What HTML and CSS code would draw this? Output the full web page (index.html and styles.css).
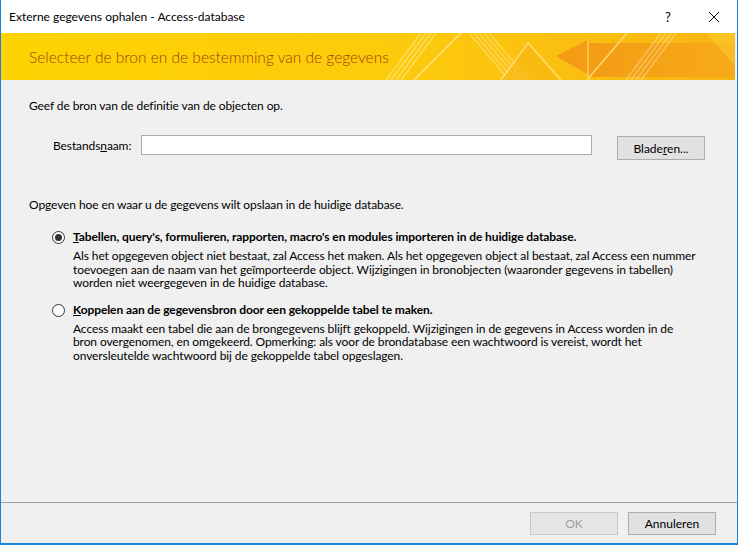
FILE: index.html
```html
<!DOCTYPE html>
<html lang="nl">
<head>
    <meta charset="UTF-8">
    <title>Externe gegevens ophalen - Access-database</title>
    <link rel="stylesheet" href="styles.css">
</head>
<body>
    <div class="window">
        <div class="titlebar">
            <div class="title">Externe gegevens ophalen - Access-database</div>
            <div class="title-btn help">?</div>
            <div class="title-btn close">
                <svg width="12" height="12" viewBox="0 0 12 12"><path d="M1 1 L11 11 M11 1 L1 11" stroke="#000" stroke-width="1"/></svg>
            </div>
        </div>

        <div class="banner">
            <svg class="banner-art" width="734" height="47" viewBox="0 0 734 47" preserveAspectRatio="none">
                <defs>
                    <linearGradient id="bg" x1="0" y1="0" x2="1" y2="0">
                        <stop offset="0" stop-color="#fdd402"/>
                        <stop offset="0.55" stop-color="#fcca0c"/>
                        <stop offset="1" stop-color="#f8b414"/>
                    </linearGradient>
                    <linearGradient id="arrow" x1="0" y1="0" x2="1" y2="0">
                        <stop offset="0" stop-color="#f39a14"/>
                        <stop offset="1" stop-color="#f7aa18"/>
                    </linearGradient>
                </defs>
                <rect width="734" height="47" fill="url(#bg)"/>
                <!-- stripe group left -->
                <g stroke="#fff" stroke-opacity="0.35" stroke-width="1.5">
                    <line x1="420" y1="0" x2="385" y2="47"/>
                    <line x1="425" y1="0" x2="390" y2="47"/>
                    <line x1="430" y1="0" x2="395" y2="47"/>
                    <line x1="435" y1="0" x2="400" y2="47"/>
                </g>
                <line x1="460" y1="0" x2="413" y2="47" stroke="#fff" stroke-opacity="0.5" stroke-width="1.5"/>
                <!-- down stripes -->
                <g stroke="#fff" stroke-opacity="0.3" stroke-width="1.5">
                    <line x1="468" y1="0" x2="508" y2="47"/>
                    <line x1="473" y1="0" x2="513" y2="47"/>
                    <line x1="478" y1="0" x2="518" y2="47"/>
                    <line x1="483" y1="0" x2="523" y2="47"/>
                    <line x1="488" y1="0" x2="528" y2="47"/>
                </g>
                <polygon points="527,10 500,47 556,47" fill="#f8b512" fill-opacity="0.6"/>
                <polyline points="500,47 527,10 560,47" fill="none" stroke="#fde68a" stroke-opacity="0.8" stroke-width="1.5"/>
                <!-- arrow -->
                <polygon points="555,23 588,6 588,10 734,10 734,44 588,44 588,42" fill="url(#arrow)"/>
                <line x1="587" y1="6" x2="587" y2="44" stroke="#fbd15a" stroke-width="1.5"/>
                <line x1="626" y1="0" x2="586" y2="47" stroke="#fde68a" stroke-opacity="0.8" stroke-width="1.5"/>
                <g stroke="#fff" stroke-opacity="0.3" stroke-width="1.5">
                    <line x1="660" y1="0" x2="625" y2="47"/>
                    <line x1="665" y1="0" x2="630" y2="47"/>
                    <line x1="670" y1="0" x2="635" y2="47"/>
                    <line x1="675" y1="0" x2="640" y2="47"/>
                </g>
                <polygon points="705,0 734,0 734,33" fill="#fcd030" fill-opacity="0.5"/>
            </svg>
            <div class="banner-title">Selecteer de bron en de bestemming van de gegevens</div>
        </div>

        <div class="content">
            <p class="intro">Geef de bron van de definitie van de objecten op.</p>

            <div class="file-row">
                <label class="file-label">Bestands<u>n</u>aam:</label>
                <div class="file-input"></div>
                <button class="btn browse">Blade<u>r</u>en...</button>
            </div>

            <p class="intro second">Opgeven hoe en waar u de gegevens wilt opslaan in de huidige database.</p>

            <div class="option">
                <div class="radio checked"><span></span></div>
                <div class="option-text">
                    <div class="option-title"><u>T</u>abellen, query's, formulieren, rapporten, macro's en modules importeren in de huidige database.</div>
                    <div class="option-desc">Als het opgegeven object niet bestaat, zal Access het maken. Als het opgegeven object al bestaat, zal Access een nummer<br>toevoegen aan de naam van het geïmporteerde object. Wijzigingen in bronobjecten (waaronder gegevens in tabellen)<br>worden niet weergegeven in de huidige database.</div>
                </div>
            </div>

            <div class="option">
                <div class="radio"></div>
                <div class="option-text">
                    <div class="option-title"><u>K</u>oppelen aan de gegevensbron door een gekoppelde tabel te maken.</div>
                    <div class="option-desc">Access maakt een tabel die aan de brongegevens blijft gekoppeld. Wijzigingen in de gegevens in Access worden in de<br>bron overgenomen, en omgekeerd. Opmerking: als voor de brondatabase een wachtwoord is vereist, wordt het<br>onversleutelde wachtwoord bij de gekoppelde tabel opgeslagen.</div>
                </div>
            </div>
        </div>

        <div class="footer">
            <button class="btn disabled">OK</button>
            <button class="btn">Annuleren</button>
        </div>
    </div>
</body>
</html>
```

FILE: styles.css
```css
body { margin: 0; font-family: Lato, "Noto Sans", sans-serif; font-size: 12px; color: #000; }

.window {
    width: 738px;
    height: 545px;
    box-sizing: border-box;
    border: 1px solid #1883d7;
    border-bottom-width: 2px;
    border-top: none;
    background: #f0f0f0;
    display: flex;
    flex-direction: column;
}

.titlebar {
    height: 33px;
    background: #fff;
    display: flex;
    align-items: center;
    padding-left: 8px;
}

.title { flex: 1; }

.title-btn {
    width: 46px;
    height: 33px;
    display: flex;
    align-items: center;
    justify-content: center;
}
.help { font-size: 13px; }

.banner {
    height: 47px;
    position: relative;
    margin-right: 2px;
    display: flex;
    align-items: center;
}

.banner-art { position: absolute; top: 0; left: 0; }

.banner-title {
    position: relative;
    padding-left: 28px;
    font-size: 15.5px;
    font-weight: 300;
    color: #a0400a;
}

.content {
    flex: 1;
    padding: 0 28px;
    letter-spacing: -0.1px;
}

.intro { margin: 19px 0 0; line-height: 14px; }
.intro.second { margin-top: 38px; }

.file-row {
    display: flex;
    align-items: center;
    margin-top: 17px;
    padding-left: 24px;
}

.file-label { width: 88px; }

.file-input {
    width: 449px;
    height: 18px;
    background: #fff;
    border: 1px solid #acacac;
}

.btn {
    width: 88px;
    height: 23px;
    font-family: inherit;
    font-size: 12px;
    background: #e1e1e1;
    border: 1px solid #adadad;
    color: #000;
    padding: 0;
}

.browse { margin-left: 25px; height: 24px; margin-top: 6px; }

.option {
    display: flex;
    margin-top: 18px;
    padding-left: 23px;
}
.option + .option { margin-top: 13px; }

.radio {
    flex: none;
    width: 11px;
    height: 11px;
    border: 1px solid #333;
    border-radius: 50%;
    background: #fff;
    margin-top: 1px;
    display: flex;
    align-items: center;
    justify-content: center;
}
.radio span {
    width: 7px;
    height: 7px;
    border-radius: 50%;
    background: #333;
}

.option-text { margin-left: 8px; }

.option-title { font-weight: bold; white-space: nowrap; line-height: 14px; }

.option-desc {
    margin-top: 5px;
    line-height: 13.5px;
    white-space: nowrap;
}

.footer {
    height: 40px;
    border-top: 1px solid #a0a0a0;
    display: flex;
    justify-content: flex-end;
    align-items: center;
    gap: 10px;
    padding-right: 21px;
}

.disabled { color: #a0a0a0; background: #e5e5e5; border-color: #c8c8c8; }
```
